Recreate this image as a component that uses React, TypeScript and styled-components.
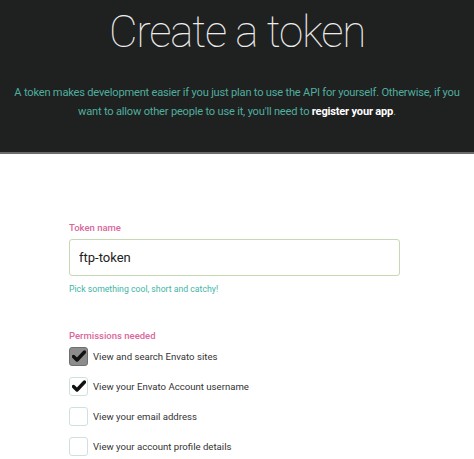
import React, { FC } from "react";
import styled, { createGlobalStyle } from "styled-components";

const GlobalStyle = createGlobalStyle`
  html, body {
    margin: 0;
    padding: 0;
    background: #ffffff;
    font-family: Roboto, "Liberation Sans", Arial, sans-serif;
  }
`;

const Hero = styled.header`
  background: #1f2020;
  border-bottom: 2px solid #6b6b6b;
  height: 154px;
  box-sizing: border-box;
  padding: 8px 8px 0;
  text-align: center;
`;

const Title = styled.h1`
  margin: 0;
  font-family: Roboto, "Liberation Sans", sans-serif;
  font-weight: 100;
  font-size: 44px;
  line-height: 48px;
  color: #ececec;
  letter-spacing: -1.2px;
`;

const Intro = styled.p`
  margin: 27px 0 0;
  font-size: 11.1px;
  line-height: 19px;
  letter-spacing: -0.2px;
  white-space: nowrap;
  color: #4fae9f;

  strong {
    color: #ffffff;
    font-weight: 700;
  }
`;

const Form = styled.form`
  width: 331px;
  margin: 68px 0 0 69px;
`;

const Label = styled.div`
  font-size: 9.5px;
  font-weight: 500;
  color: #d9689b;
  line-height: 12px;
`;

const TextInput = styled.input`
  display: block;
  box-sizing: border-box;
  width: 100%;
  height: 37px;
  margin-top: 5px;
  padding: 0 9px;
  border: 1.5px solid #c6d9b3;
  border-radius: 3px;
  background: #ffffff;
  font-family: Roboto, "Liberation Sans", sans-serif;
  font-size: 13px;
  color: #222222;
  outline: none;
`;

const Hint = styled.div`
  margin-top: 7px;
  font-size: 8.7px;
  line-height: 12px;
  color: #3fb5a5;
`;

const Section = styled.div`
  margin-top: 35px;
`;

const List = styled.div`
  margin-top: 4px;
  display: flex;
  flex-direction: column;
  gap: 10px;
`;

const Row = styled.label`
  display: flex;
  align-items: center;
  gap: 5px;
  height: 20px;
  font-size: 9.6px;
  color: #333333;
`;

const Box = styled.span<{ $variant: "filled" | "checked" | "empty" }>`
  width: 19px;
  height: 19px;
  box-sizing: border-box;
  border-radius: 3px;
  display: flex;
  align-items: center;
  justify-content: center;
  border: 1px solid ${(p) => (p.$variant === "filled" ? "#6f6f6f" : "#cfe1dc")};
  background: ${(p) => (p.$variant === "filled" ? "#8c8c8c" : "#ffffff")};
`;

const Check: FC = () => (
  <svg width="14" height="12" viewBox="0 0 14 12">
    <path
      d="M1.5 6.5 L5 10 L12.5 2"
      fill="none"
      stroke="#111"
      strokeWidth="3.4"
      strokeLinecap="round"
      strokeLinejoin="round"
    />
  </svg>
);

const permissions: { label: string; variant: "filled" | "checked" | "empty" }[] = [
  { label: "View and search Envato sites", variant: "filled" },
  { label: "View your Envato Account username", variant: "checked" },
  { label: "View your email address", variant: "empty" },
  { label: "View your account profile details", variant: "empty" },
];

const App: FC = () => {
  return (
    <>
      <GlobalStyle />
      <Hero>
        <Title>Create a token</Title>
        <Intro>
          A token makes development easier if you just plan to use the API for yourself. Otherwise, if you
          <br />
          want to allow other people to use it, you'll need to <strong>register your app</strong>.
        </Intro>
      </Hero>
      <Form onSubmit={(e) => e.preventDefault()}>
        <Label>Token name</Label>
        <TextInput defaultValue="ftp-token" />
        <Hint>Pick something cool, short and catchy!</Hint>
        <Section>
          <Label>Permissions needed</Label>
          <List>
            {permissions.map((p) => (
              <Row key={p.label}>
                <Box $variant={p.variant}>{p.variant !== "empty" && <Check />}</Box>
                {p.label}
              </Row>
            ))}
          </List>
        </Section>
      </Form>
    </>
  );
};

export default App;
